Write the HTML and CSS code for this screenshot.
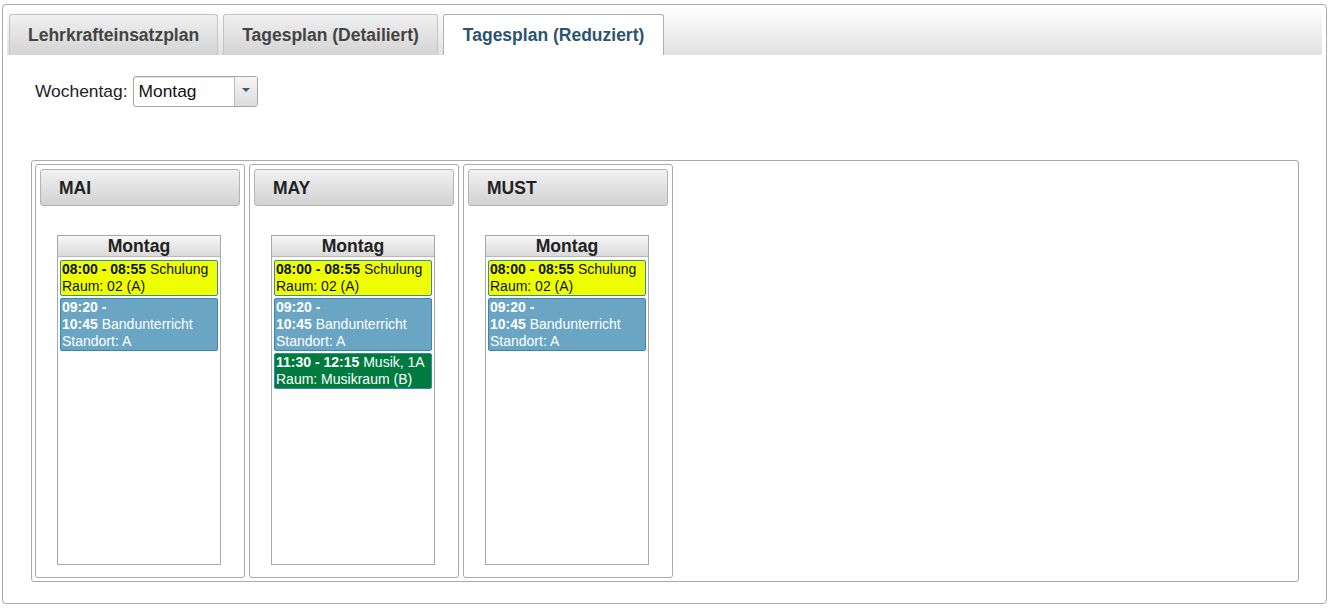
FILE: index.html
```html
<!DOCTYPE html>
<html lang="de">
<head>
<meta charset="utf-8">
<title>Tagesplan</title>
<link rel="stylesheet" href="styles.css">
</head>
<body>
<div class="tabs">
  <ul class="tab-nav">
    <li class="tab">Lehrkrafteinsatzplan</li>
    <li class="tab">Tagesplan (Detailiert)</li>
    <li class="tab active">Tagesplan (Reduziert)</li>
  </ul>
  <div class="tab-panel">
    <div class="toolbar">
      <label class="label">Wochentag:</label>
      <div class="select">
        <span class="select-value">Montag</span>
        <span class="select-btn"><span class="caret"></span></span>
      </div>
    </div>
    <div class="board">
      <div class="column">
        <div class="col-head">MAI</div>
        <div class="day">
          <div class="day-head">Montag</div>
          <div class="events">
            <div class="event yellow"><b>08:00 - 08:55</b> Schulung<br>Raum: 02 (A)</div>
            <div class="event blue"><b>09:20 -</b> <span class="nw"><b>10:45</b> Bandunterricht</span><br>Standort: A</div>
          </div>
        </div>
      </div>
      <div class="column">
        <div class="col-head">MAY</div>
        <div class="day">
          <div class="day-head">Montag</div>
          <div class="events">
            <div class="event yellow"><b>08:00 - 08:55</b> Schulung<br>Raum: 02 (A)</div>
            <div class="event blue"><b>09:20 -</b> <span class="nw"><b>10:45</b> Bandunterricht</span><br>Standort: A</div>
            <div class="event green"><b>11:30 - 12:15</b> Musik, 1A<br>Raum: Musikraum (B)</div>
          </div>
        </div>
      </div>
      <div class="column">
        <div class="col-head">MUST</div>
        <div class="day">
          <div class="day-head">Montag</div>
          <div class="events">
            <div class="event yellow"><b>08:00 - 08:55</b> Schulung<br>Raum: 02 (A)</div>
            <div class="event blue"><b>09:20 -</b> <span class="nw"><b>10:45</b> Bandunterricht</span><br>Standort: A</div>
          </div>
        </div>
      </div>
    </div>
  </div>
</div>
</body>
</html>
```
FILE: styles.css
```css
* { box-sizing: border-box; }
html, body { background: #fff; }
body {
  margin: 0;
  padding: 4px 6px 0 2px;
  font-family: "Liberation Sans", Arial, sans-serif;
  color: #222;
}
.tabs {
  border: 1px solid #aaa;
  border-radius: 4px;
  padding: 4px;
  height: 600px;
}
.tab-nav {
  list-style: none;
  margin: 0;
  padding: 5px 0 0 2px;
  display: flex;
  gap: 5px;
  background: linear-gradient(#fdfdfd, #e1e1e1);
  border-radius: 3px 3px 0 0;
}
.tab {
  height: 41px;
  padding: 0 18px;
  display: flex;
  align-items: center;
  font-size: 17.5px;
  font-weight: bold;
  color: #444;
  border: 1px solid #c4c4c4;
  border-bottom: none;
  border-radius: 3px 3px 0 0;
  background: linear-gradient(#f0f0f0, #d4d4d4);
}
.tab.active {
  background: #fff;
  color: #2b5470;
  border-color: #b0b0b0;
  padding: 0 19px;
}
.toolbar {
  display: flex;
  align-items: center;
  gap: 5px;
  padding: 21px 0 0 28px;
}
.label {
  font-size: 17.4px;
  color: #222;
}
.select {
  width: 125px;
  height: 31px;
  border: 1px solid #a6a6a6;
  border-radius: 3px;
  display: flex;
  box-shadow: inset 0 1px 1px rgba(0,0,0,0.12);
  overflow: hidden;
}
.select-value {
  flex: 1;
  padding-left: 5px;
  display: flex;
  align-items: center;
  font-size: 17.4px;
  color: #111;
}
.select-btn {
  width: 23px;
  border-left: 1px solid #bbb;
  background: linear-gradient(#f6f6f6, #dcdcdc);
  display: flex;
  justify-content: center;
  padding-top: 11px;
}
.caret {
  width: 0;
  height: 0;
  border-left: 4px solid transparent;
  border-right: 4px solid transparent;
  border-top: 4px solid #3b5b75;
}
.board {
  margin: 53px 23px 0 24px;
  border: 1px solid #aaa;
  border-radius: 3px;
  padding: 3px;
  display: flex;
  gap: 4px;
}
.column {
  width: 210px;
  border: 1px solid #aaa;
  border-radius: 3px;
  padding: 4px 4px 12px;
}
.col-head {
  height: 37px;
  border: 1px solid #b4b4b4;
  border-radius: 3px;
  background: linear-gradient(#f1f1f1, #d2d2d2);
  font-size: 17.5px;
  font-weight: bold;
  color: #222;
  display: flex;
  align-items: center;
  padding: 2px 0 0 18px;
}
.day {
  width: 164px;
  height: 330px;
  margin: 29px 0 0 17px;
  border: 1px solid #a8a8a8;
}
.day-head {
  height: 21px;
  border-bottom: 1px solid #b8b8b8;
  background: linear-gradient(#f7f7f7, #d9d9d9);
  text-align: center;
  font-size: 17.6px;
  font-weight: bold;
  line-height: 20px;
  color: #222;
}
.events {
  padding: 3px 2px;
  display: flex;
  flex-direction: column;
  gap: 2px;
}
.event {
  border: 1px solid #3a87ad;
  border-radius: 2px;
  padding: 0 1px;
  font-size: 14px;
  line-height: 17px;
}
.event b { font-weight: bold; }
.nw { white-space: nowrap; }
.yellow { background: #eeff00; color: #111; }
.blue { background: #6aa5c4; color: #fff; }
.green { background: #007b40; color: #fff; }
```
